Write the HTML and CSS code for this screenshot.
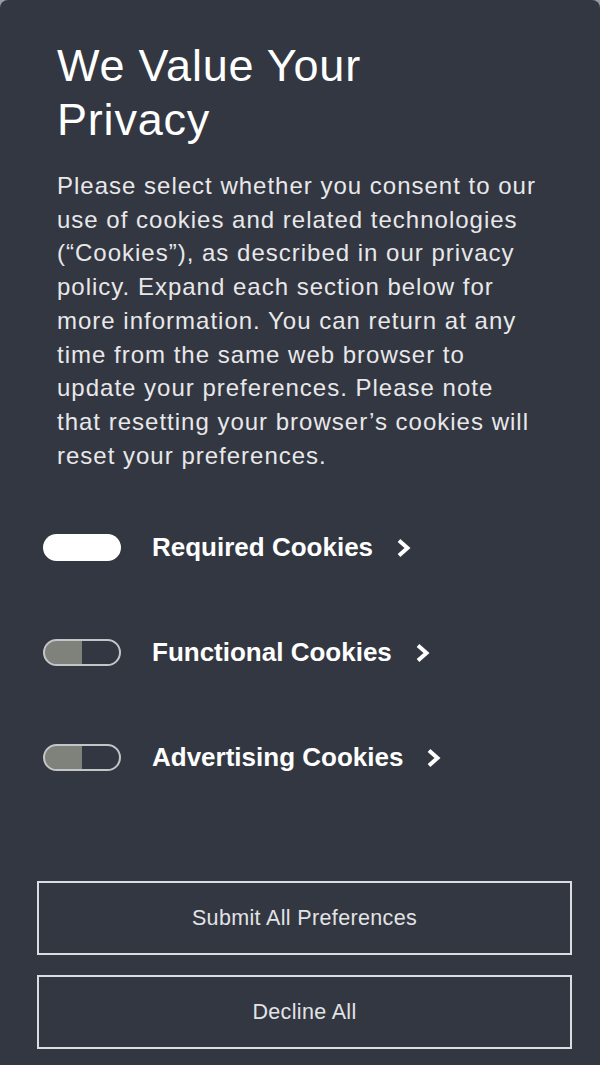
FILE: index.html
```html
<!DOCTYPE html>
<html lang="en">
<head>
<meta charset="utf-8">
<title>We Value Your Privacy</title>
<link rel="stylesheet" href="styles.css">
</head>
<body>
<div class="panel">
  <div class="intro">
    <h1 class="title">We Value Your Privacy</h1>
    <p class="desc">Please select whether you consent to our use of cookies and related technologies (“Cookies”), as described in our privacy policy. Expand each section below for more information. You can return at any time from the same web browser to update your preferences. Please note that resetting your browser’s cookies will reset your preferences.</p>
  </div>
  <div class="prefs">
    <div class="pref">
      <span class="toggle toggle-on"></span>
      <span class="pref-label">Required Cookies</span>
      <svg class="chev" width="14" height="20" viewBox="0 0 14 20"><polyline points="2,2.5 10.5,10 2,17.5" fill="none" stroke="#fff" stroke-width="4"/></svg>
    </div>
    <div class="pref">
      <span class="toggle toggle-off"></span>
      <span class="pref-label">Functional Cookies</span>
      <svg class="chev" width="14" height="20" viewBox="0 0 14 20"><polyline points="2,2.5 10.5,10 2,17.5" fill="none" stroke="#fff" stroke-width="4"/></svg>
    </div>
    <div class="pref">
      <span class="toggle toggle-off"></span>
      <span class="pref-label">Advertising Cookies</span>
      <svg class="chev" width="14" height="20" viewBox="0 0 14 20"><polyline points="2,2.5 10.5,10 2,17.5" fill="none" stroke="#fff" stroke-width="4"/></svg>
    </div>
  </div>
  <div class="actions">
    <button class="btn">Submit All Preferences</button>
    <button class="btn">Decline All</button>
  </div>
</div>
</body>
</html>
```
FILE: styles.css
```css
html, body {
  margin: 0;
  padding: 0;
}
body {
  background: #9a9b9e;
  font-family: "Liberation Sans", Arial, sans-serif;
}
.panel {
  width: 600px;
  height: 1065px;
  box-sizing: border-box;
  background: #333741;
  border-radius: 8px 8px 0 0;
  overflow: hidden;
  display: flex;
  flex-direction: column;
}
.intro {
  padding: 39px 43px 0 57px;
}
.title {
  margin: 0;
  max-width: 340px;
  font-size: 45px;
  line-height: 54px;
  font-weight: normal;
  letter-spacing: 0.8px;
  color: #ffffff;
}
.desc {
  margin: 22px 0 0 0;
  width: 486px;
  font-size: 24px;
  line-height: 33.7px;
  letter-spacing: 1px;
  color: #e8e8ea;
}
.prefs {
  display: flex;
  flex-direction: column;
  gap: 78px;
  padding: 0 0 0 43px;
  margin-top: 62px;
}
.pref {
  display: flex;
  align-items: center;
  height: 27px;
}
.toggle {
  flex: none;
  width: 78px;
  height: 27px;
  box-sizing: border-box;
  border-radius: 14px;
}
.toggle-on {
  background: #ffffff;
}
.toggle-off {
  border: 2px solid #c4c5c7;
  background: linear-gradient(to right, #7f827b 0, #7f827b 50%, transparent 50%);
}
.pref-label {
  margin-left: 31px;
  font-size: 26px;
  font-weight: bold;
  color: #ffffff;
}
.chev {
  margin-left: 24px;
  flex: none;
}
.actions {
  display: flex;
  flex-direction: column;
  gap: 20px;
  padding: 0 28px 0 37px;
  margin-top: 110px;
}
.btn {
  height: 74px;
  background: transparent;
  border: 2px solid #dcdde0;
  color: #e2e3e5;
  font-family: "Liberation Sans", Arial, sans-serif;
  font-size: 21.5px;
  letter-spacing: 0.35px;
  padding: 0;
}
```
